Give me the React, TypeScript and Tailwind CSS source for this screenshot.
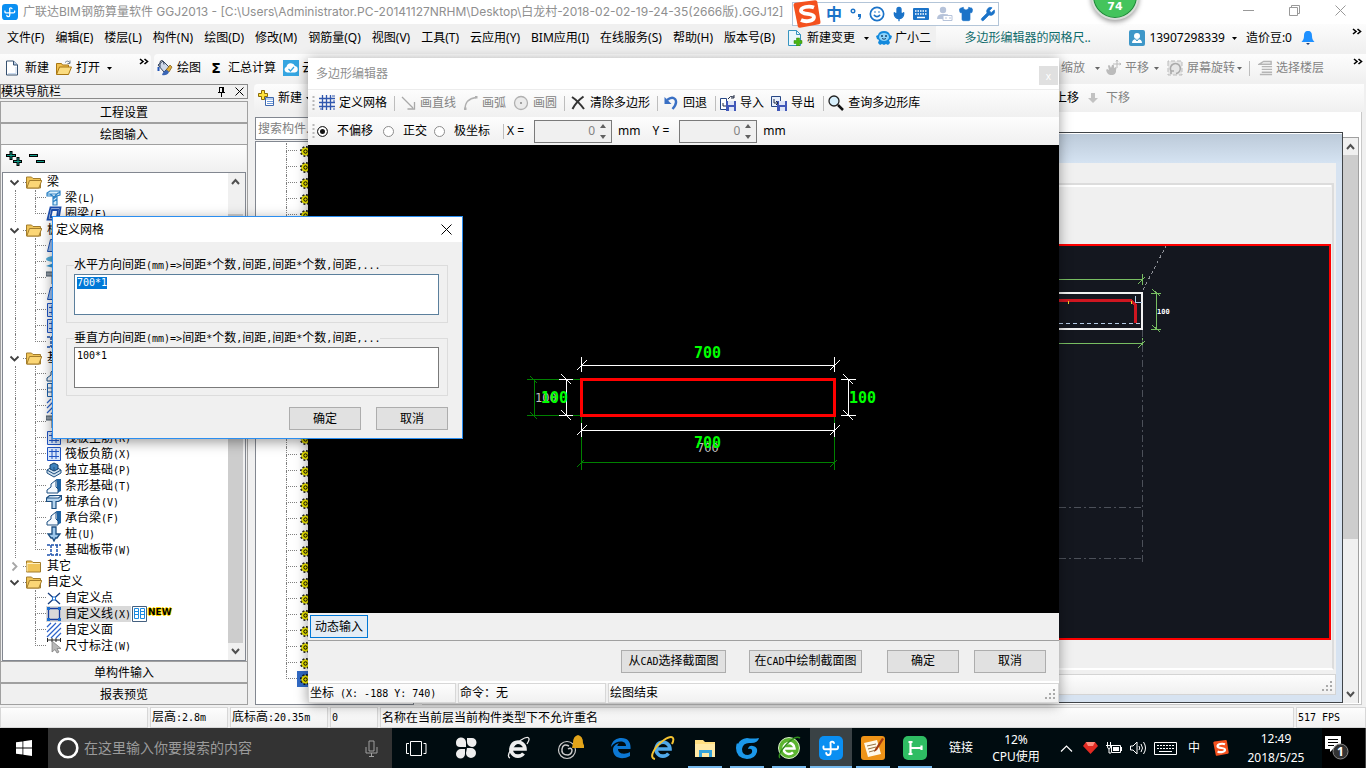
import { useEffect, useRef } from 'react';
import type { ReactNode } from 'react';
import { Mic, Shirt, Smile, Wrench } from 'lucide-react';

interface IconProps {
  children: ReactNode;
  className?: string;
  box?: string;
}
const Icon = ({ children, className = 'h-4 w-4', box = '0 0 16 16' }: IconProps) => (
  <svg className={`shrink-0 ${className}`} viewBox={box} fill="none" aria-hidden="true">
    {children}
  </svg>
);

// Half-width latin next to full-width han characters
const Song = ({ text }: { text: string }) => (
  <span className="whitespace-pre">
    {text.split(/([\x20-\x7e]+)/).map((part, i) =>
      i % 2 ? (
        <span key={i} className="font-['DejaVu_Sans_Mono',monospace] text-[10px]">
          {part}
        </span>
      ) : (
        part
      ),
    )}
  </span>
);

const Caret = ({ className = 'text-black' }: { className?: string }) => (
  <Icon className={`h-2 w-[7px] ${className}`} box="0 0 7 8">
    <path d="M1 3h5L3.500 6z" fill="currentColor" />
  </Icon>
);

const Separator = () => <span className="h-[15px] w-px shrink-0 bg-[#bdbdbd]" />;

const More = () => (
  <Icon className="h-2 w-[10px]" box="0 0 10 8">
    <path d="M1 1l3 2.500L1 6M5.500 1l3 2.500L5.500 6" stroke="#000" strokeWidth="1.600" />
  </Icon>
);

const Handle = () => (
  <Icon className="h-4 w-[3px]" box="0 0 3 16">
    <path d="M1.500 1v15" stroke="#b8b8b8" strokeWidth="2" strokeDasharray="2 2" />
  </Icon>
);

const AppLogo = ({ className }: { className: string }) => (
  <Icon className={className} box="0 0 24 24">
    <rect width="24" height="24" rx="5" fill="#0a8ff2" />
    <path
      d="M15 7a2 2 0 0 0-3.500-.5Q11.700 10 11.700 16q0 3-2.200 3-2 0-2.300-2M4.500 10.500q-.5 2.800 1.500 2.800h11q2.500 0 2-2.800"
      stroke="#fff"
      strokeWidth="1.900"
      strokeLinecap="round"
    />
  </Icon>
);

const SogouLogo = ({ className }: { className: string }) => (
  <Icon className={className} box="0 0 28 28">
    <path d="M.5 5Q.5 3 2.500 2.700L22 .2q2-.2 2.300 1.500L27.500 22q.2 1.800-1.500 2.200L7 27.700q-1.800.2-2.200-1.500z" fill="#f4511e" />
    <path d="M21 7.500C16 5.500 7.500 7 8 11s13 2 13 6-8 5.500-13 3" stroke="#fff" strokeWidth="3.800" />
  </Icon>
);

const TitleBar = () => (
  <header className="flex h-6 shrink-0 items-center bg-white pr-5 text-[#8f8f8f]">
    <AppLogo className="ml-0.5 h-4 w-4" />
    <h1 className="ml-[5px] font-['Inter','Noto_Sans_CJK_SC',sans-serif] whitespace-nowrap">
      广联达BIM钢筋算量软件 GGJ2013 - [C:\Users\Administrator.PC-20141127NRHM\Desktop\白龙村-2018-02-02-19-24-35(2666版).GGJ12]
    </h1>
    <div className="mb-1 ml-auto flex gap-[35px]">
      <button aria-label="最小化">
        <Icon className="h-[11px] w-[11px]" box="0 0 11 11">
          <path d="M0 5.500h11" stroke="#999" />
        </Icon>
      </button>
      <button aria-label="还原">
        <Icon className="h-[11px] w-[11px]" box="0 0 11 11">
          <path d="M.5 2.500h8v8h-8zM2.500 2.500v-2h8v8h-2" stroke="#999" />
        </Icon>
      </button>
      <button aria-label="关闭">
        <Icon className="h-[11px] w-[11px]" box="0 0 11 11">
          <path d="M.5.5l10 10m0-10l-10 10" stroke="#999" />
        </Icon>
      </button>
    </div>
  </header>
);

const menus = [
  '文件(F)',
  '编辑(E)',
  '楼层(L)',
  '构件(N)',
  '绘图(D)',
  '修改(M)',
  '钢筋量(Q)',
  '视图(V)',
  '工具(T)',
  '云应用(Y)',
  'BIM应用(I)',
  '在线服务(S)',
  '帮助(H)',
  '版本号(B)',
];

const MenuBar = () => (
  <nav className="flex h-[30px] shrink-0 items-center bg-[#f0f0f0] pb-[3px] pl-[7px] whitespace-nowrap">
    <div className="flex gap-[11px]">
      {menus.map((m) => (
        <button key={m}>{m}</button>
      ))}
    </div>
    <button className="ml-3 flex items-center gap-1">
      <Icon>
        <path d="M1.500.5h8l4 4v11h-12z" fill="#eaf7fd" stroke="#3795c0" />
        <path d="M9.500.5v4h4" stroke="#3795c0" />
        <path d="M9.500 8h3v2.500H15v3h-2.500V16h-3v-2.500H7v-3h2.500z" fill="#49b512" stroke="#2e8409" strokeWidth=".5" />
      </Icon>
      新建变更
      <Caret className="ml-1 text-black" />
    </button>
    <button className="ml-[6px] flex items-center gap-[3px]">
      <Icon>
        <path d="M0 6l2-1q1-4 6-4t6 4l2 1-1 3-2 1 1 3-2 2-2-1-2 1-2-1-2 1-2-2 1-3-2-1z" fill="#1389dc" />
        <ellipse cx="8" cy="7" rx="5" ry="4" fill="#8cd3fb" />
        <circle cx="6" cy="6" r="1" fill="#17466e" />
        <circle cx="10" cy="6" r="1" fill="#17466e" />
        <path d="M6 8.500q2 1.500 4 0" stroke="#17466e" />
      </Icon>
      广小二
    </button>
    <div className="ml-auto flex h-full items-center bg-linear-to-b from-[#fcfcfc] to-[#f0f0f0] pl-7 text-[#0f6b6b]">
      <a href="#tip" className="w-[160px]">
        多边形编辑器的网格尺..
      </a>
    </div>
    <div className="flex h-full items-center bg-linear-to-b from-[#fcfcfc] to-[#f0f0f0] pr-1 pl-[5px]">
      <button className="flex items-center gap-1">
        <Icon>
          <rect width="16" height="16" rx="2" fill="#3e97c8" />
          <circle cx="8" cy="6" r="3" fill="#fff" />
          <path d="M3 13q0-4 5-4t5 4z" fill="#fff" />
          <path d="M6.500 9L8 11l1.500-2" stroke="#3e97c8" />
        </Icon>
        13907298339
        <Caret className="ml-0.5 text-black" />
      </button>
      <span className="ml-2">造价豆:0</span>
      <Icon className="ml-2 h-4 w-4">
        <path d="M8 1c3 0 4 2 4 5 0 3 1 4 2.500 6h-13C3 10 4 9 4 6c0-3 1-5 4-5z" fill="#1e90ff" />
        <path d="M6 13h4l-2 2z" fill="#1d3d75" />
      </Icon>
      <span className="mb-3 ml-9">
        <More />
      </span>
    </div>
  </nav>
);

const NewPageIcon = () => (
  <Icon>
    <path d="M1.500 1h7l4 4v10h-11z" fill="#fff" stroke="#35506f" />
    <path d="M3 13.500h8V7" stroke="#c7d8ee" />
    <path d="M8.500 1v4h4" fill="#b9cce6" stroke="#35506f" />
  </Icon>
);

const OpenFolderIcon = () => (
  <Icon>
    <path d="M.5 3.500h5l1 1.500h6v9h-12z" fill="#f0c050" stroke="#a97611" />
    <path d="M3.500 7h12l-3 7.500H.5z" fill="#fbdc80" stroke="#a97611" />
    <path d="M9 2.500q3-3 5 .5m0-2.500v3h-2.500" stroke="#6e7f91" />
  </Icon>
);

const bar = 'bg-linear-to-b from-[#fdfdfd] to-[#f0f0f0]';

const MainToolbar = () => (
  <div className="flex h-[30px] shrink-0 items-center gap-[3px] pb-0.5 whitespace-nowrap">
    <div className={`flex h-7 w-[151px] shrink-0 items-center rounded-r pl-[5px] ${bar}`}>
      <button className="flex items-center gap-1">
        <NewPageIcon />
        新建
      </button>
      <button className="ml-[7px] flex items-center gap-1">
        <OpenFolderIcon />
        打开
        <Caret className="ml-0.5 text-black" />
      </button>
      <span className="mr-0.5 mb-3 ml-auto">
        <More />
      </span>
    </div>
    <div className={`flex h-7 flex-1 items-center rounded-l pl-[3px] ${bar}`}>
      <button className="flex items-center gap-1">
        <Icon>
          <path d="M1 5l5-4 6 6-5 5z" fill="#cfd9ea" stroke="#34435c" />
          <path d="M3 7V2.500q0-2 2-2t2 4" stroke="#34435c" />
          <path d="M1.500 7v4" stroke="#2356b8" strokeWidth="2" />
          <path d="M9 10l4-5 2 2-3 5z" fill="#e0ac39" stroke="#7d5810" strokeWidth=".7" />
          <path d="M5 15q1-4 5-5l2 2q-2 4-7 3z" fill="#3b66b5" />
        </Icon>
        绘图
      </button>
      <button className="ml-[10px] flex items-center gap-[7px]">
        <span className="w-[10px] font-['DejaVu_Sans'] text-sm leading-4 font-bold">Σ</span>
        汇总计算
      </button>
      <button className="ml-[7px] flex items-center gap-[3px]">
        <Icon>
          <rect width="16" height="16" fill="#35a5e1" />
          <path d="M4 12.500a3 3 0 0 1-.5-5.800A4.500 4.500 0 0 1 12 6a3.300 3.300 0 0 1 0 6.500z" fill="#fff" />
          <path d="M5.500 9l2 2 3.500-4" stroke="#35a5e1" strokeWidth="1.200" />
        </Icon>
        云
      </button>
      <div className="ml-auto flex items-center text-[#838383]">
        <button className="flex items-center gap-[9px]">
          缩放
          <Caret className="text-[#666]" />
        </button>
        <button className="ml-1 flex items-center gap-1">
          <Icon>
            <path d="M3 14q-3-4-1-5l2 1-1-4q1-2 2 0l1 2 1-3q2-1 2 1v2l2-1q1 1 0 3v2q-1 3-3 3H5z" fill="#bbb" />
            <path d="M12 0v8M8 4h8M11 1.500L12 0l1 1.500M14.500 3L16 4l-1.500 1" stroke="#bbb" />
          </Icon>
          平移
          <Caret className="text-[#666]" />
        </button>
        <button className="ml-[7px] flex items-center gap-1">
          <Icon>
            <path d="M1 4V1h14v14H1z" fill="#e6e6e6" stroke="#bbb" strokeDasharray="4 2" />
            <path d="M4 11a5 5 0 1 1 5 2.500M4 14v-3h3" stroke="#aaa" strokeWidth="1.600" />
          </Icon>
          屏幕旋转
        </button>
        <span className="mr-2 ml-px flex items-center gap-[6px]">
          <Caret className="text-[#666]" />
          <Separator />
        </span>
        <button className="flex items-center gap-[3px]">
          <Icon className="h-4 w-[15px]">
            <path d="M1 4l5-3h8v3zM4 6.500h11M4 9.500h11M4 12.500h11M2 15h13" stroke="#b5b5b5" strokeWidth="1.500" />
          </Icon>
          选择楼层
        </button>
        <span className="mr-[3px] mb-3 ml-[29px]">
          <More />
        </span>
      </div>
    </div>
  </div>
);

const shapes: Record<string, ReactNode> = {
  beam: <path d="M1 3l3-2h10v4l-3 1v9H7V6H1zM1 4h10l3-2M4 4l4 3 4-4M7 9l4-3M7 12l4-3" stroke="#2f83c5" strokeWidth="1.200" fill="#d5edfb" />,
  ring: <path d="M4.500 1.500h10l-2 12h-11zM6 4h6l-1 7H4.500z" stroke="#1d4fae" strokeWidth="1.800" />,
  slab: <path d="M4.500 1.500h10l-2 12h-11z" stroke="#1d4fae" fill="#9fc2f1" />,
  hole: (
    <>
      <ellipse cx="8" cy="5" rx="8" ry="3" fill="#51acd8" />
      <path d="M0 12l8-3 7 3-7 2z" fill="#3797cf" />
    </>
  ),
  cap: <path d="M0 2h15v3h-5v9H6V6H0z" fill="#8d98a3" stroke="#4b5a68" />,
  grid: <path d="M1.500 1.500h13v13h-13zM1.500 6h13M1.500 10h13M6 1.500v13M10 1.500v13" stroke="#1d5fa8" />,
  bars: <path d="M1.500 1.500h13v13h-13zM3 5.500h10M3 10.500h10M6 3v10M10 3v10" stroke="#2154c2" fill="#d9e7fb" />,
  footing: (
    <>
      <path d="M1 8l7-4 7 4v3l-7 4-7-4z" fill="#cfe0ee" stroke="#1c4e80" />
      <path d="M4 3l4-2 4 2v4l-4 2-4-2z" fill="#3f83bd" stroke="#123f6d" />
      <path d="M1 8l7 4 7-4M8 5v4" stroke="#1c4e80" />
    </>
  ),
  strip: (
    <>
      <path d="M10 1h5v12l-4 2V5z" fill="#1d62a2" />
      <path d="M1 15v-3l4-3V6l5-4v7l2 2v4z" fill="#f4f9fd" stroke="#1c4e80" />
    </>
  ),
  pileCap: <path d="M.5 4l3-2.500h12v4l-3 2H10v7H6v-7H.5zM.5 4h12l3-2.500" fill="#b5d4ee" stroke="#1c4e80" strokeWidth="1.200" />,
  pile: <path d="M6 1h4v7h4l-3 4H9.500L8 15l-1.500-3H5L2 8h4z" fill="#9ec8eb" stroke="#1c4e80" strokeWidth="1.300" />,
  band: <path d="M1 3h14M1 13h14M5 3v10M11 3v10" stroke="#1d52ad" strokeWidth="1.500" strokeDasharray="3 1" />,
  point: (
    <>
      <path d="M2 3l12 11M14 3L2 14" stroke="#173b7a" strokeWidth="1.300" />
      <rect x="6.500" y="7" width="3" height="3" fill="#fff" stroke="#1c6fd0" />
    </>
  ),
  line: (
    <>
      <path d="M2.500 2.500h11v11h-11z" stroke="#173b9a" strokeWidth="1.300" />
      <path d="M1 1h3v3H1zM12 1h3v3h-3zM1 12h3v3H1zM12 12h3v3h-3z" fill="#1c6fd0" />
    </>
  ),
  face: <path d="M1 5l4-4M1 10l9-9M1 15L15 1M5 16L15 6M10 16l5-5" stroke="#2c62c9" strokeWidth="1.200" />,
  dim: (
    <>
      <path d="M1.500 0v4M14.500 0v4M1.500 2h13M6 0v4M10 0v4" stroke="#222" />
      <path d="M6 3v11l3-2.500 2 3.500 2-1-2-3.500h4z" fill="#b8b8b8" stroke="#777" strokeWidth=".7" />
    </>
  ),
};

interface Group {
  name: string;
  open: boolean;
  items: { icon: string; label: string; selected?: boolean }[];
}

const groups: Group[] = [
  {
    name: '梁',
    open: true,
    items: [
      { icon: 'beam', label: '梁(L)' },
      { icon: 'ring', label: '圈梁(E)' },
    ],
  },
  {
    name: '板',
    open: true,
    items: [
      { icon: 'slab', label: '' },
      { icon: 'hole', label: '' },
      { icon: 'cap', label: '' },
      { icon: 'slab', label: '' },
      { icon: 'bars', label: '' },
      { icon: 'bars', label: '' },
      { icon: 'band', label: '' },
    ],
  },
  {
    name: '基础',
    open: true,
    items: [
      { icon: 'strip', label: '' },
      { icon: 'grid', label: '' },
      { icon: 'face', label: '' },
      { icon: 'cap', label: '' },
      { icon: 'bars', label: '筏板主筋(R)' },
      { icon: 'bars', label: '筏板负筋(X)' },
      { icon: 'footing', label: '独立基础(P)' },
      { icon: 'strip', label: '条形基础(T)' },
      { icon: 'pileCap', label: '桩承台(V)' },
      { icon: 'strip', label: '承台梁(F)' },
      { icon: 'pile', label: '桩(U)' },
      { icon: 'band', label: '基础板带(W)' },
    ],
  },
  { name: '其它', open: false, items: [] },
  {
    name: '自定义',
    open: true,
    items: [
      { icon: 'point', label: '自定义点' },
      { icon: 'line', label: '自定义线(X)', selected: true },
      { icon: 'face', label: '自定义面' },
      { icon: 'dim', label: '尺寸标注(W)' },
    ],
  },
];

const FolderIcon = ({ open }: { open: boolean }) => (
  <Icon>
    <path d="M.5 3h5l1.500 1.500h7.500V14H.5z" fill="#f0c458" stroke="#a37d2c" />
    {open ? (
      <path d="M3.500 6.500h12.300l-3 7.500H.8z" fill="#fbd676" stroke="#a37d2c" />
    ) : (
      <path d="M1 13.500V5.500h13" stroke="#fff0c0" />
    )}
  </Icon>
);

const ScrollArrow = ({ down = false }: { down?: boolean }) => (
  <Icon className={`h-[17px] w-[15px] ${down ? 'rotate-180' : ''}`} box="0 0 15 17">
    <path d="M4 11l3.500-4 3.500 4" stroke="#505050" strokeWidth="2" />
  </Icon>
);

const Branch = ({ last }: { last: boolean }) => (
  <span className="flex w-[11px] shrink-0 flex-col">
    <span className="h-2 border-b border-l border-dotted border-[#808080]" />
    <span className={last ? 'h-2' : 'h-2 border-l border-dotted border-[#808080]'} />
  </span>
);

const ModuleTree = () => (
  <div className="flex min-h-0 flex-1 border border-[#828790] bg-white">
    <ul className="min-w-0 flex-1 overflow-hidden pt-px">
      {groups.map((g, gi) => (
        <li key={g.name}>
          <div className="flex h-4 items-center pl-[6px]">
            <Icon className="h-[11px] w-[11px]" box="0 0 11 11">
              {g.open ? (
                <path d="M1.500 3.500l4 4 4-4" stroke="#404040" strokeWidth="1.800" />
              ) : (
                <path d="M3.500 1.500l4 4-4 4" stroke="#a6a6a6" strokeWidth="1.800" />
              )}
            </Icon>
            <span className="ml-[3px] w-[3px] border-b border-dotted border-[#808080]" />
            <FolderIcon open={g.open} />
            <span className="ml-[5px]">{g.name}</span>
          </div>
          <ul>
            {g.items.map((item, i) => (
              <li key={i} className="flex h-4 items-center">
                <span
                  className={
                    gi < 3
                      ? 'ml-3 h-4 w-5 shrink-0 border-l border-dotted border-[#808080]'
                      : 'ml-3 h-4 w-5 shrink-0'
                  }
                />
                <Branch last={i === g.items.length - 1} />
                <span className={item.selected ? 'flex h-4 items-center bg-[#d9d9d9]' : 'flex h-4 items-center'}>
                  <Icon className="h-4 w-4">{shapes[item.icon]}</Icon>
                  <span className="ml-[3px]">
                    <Song text={item.label} />
                  </span>
                </span>
                {item.selected && (
                  <>
                    <Icon className="ml-px h-4 w-4">
                      <path d="M.5.5h14v15H.5z" fill="#fff" stroke="#44607f" />
                      <path d="M2.500 2.500h4v10h-4zM8.500 2.500h4v10h-4zM3 5.500h3M3 8.500h3M9 5.500h3M9 8.500h3" stroke="#1c8ae0" />
                    </Icon>
                    <b className="mb-1 font-['DejaVu_Sans'] text-[9px] leading-[9px] [text-shadow:1px_0_0_#ffd800,-1px_0_0_#ffd800,0_1px_0_#ffd800,0_-1px_0_#ffd800]">
                      NEW
                    </b>
                  </>
                )}
              </li>
            ))}
          </ul>
        </li>
      ))}
    </ul>
    <div className="flex w-[17px] shrink-0 flex-col bg-[#f0f0f0]">
      <ScrollArrow />
      <div className="mt-6 w-[15px] flex-1 bg-[#cdcdcd]" />
      <ScrollArrow down />
    </div>
  </div>
);

const navButton = 'h-[22px] shrink-0 border border-[#a0a0a0] bg-[#f0f0f0] text-center leading-[21px]';

const ModulePanel = () => (
  <aside className="flex w-[248px] shrink-0 flex-col bg-[#f0f0f0]">
    <div className="mb-[2px] flex h-[15px] shrink-0 items-center border border-[#8a8a8a] bg-[#f0f0f0] pr-[3px]">
      模块导航栏
      <Icon className="ml-auto h-[11px] w-[11px]" box="0 0 11 11">
        <path d="M3.500 1v5M7.500 1v5M3.500 1.500h4M2 6.500h7M5.500 7v4" stroke="#000" />
        <path d="M7 1v5" stroke="#000" strokeWidth="2" />
      </Icon>
      <Icon className="ml-2 h-[9px] w-[9px]" box="0 0 9 9">
        <path d="M.5.5l8 8m0-8l-8 8" stroke="#000" />
      </Icon>
    </div>
    <button className={navButton}>工程设置</button>
    <button className={navButton}>绘图输入</button>
    <div className="flex min-h-0 flex-1 flex-col border-x border-[#a0a0a0] px-px">
      <div className={`flex h-[27px] shrink-0 items-center gap-[7px] pl-1 ${bar}`}>
        <Icon>
          <path d="M5 0v9M0 4.500h10M12 6v9M7 10.500h9" stroke="#000" strokeWidth="3" />
          <path d="M5 1v7M1 4.500h8M12 7v7M8 10.500h7" stroke="#12a08c" />
        </Icon>
        <Icon>
          <path d="M0 4.500h9M7 10.500h9" stroke="#000" strokeWidth="3" />
          <path d="M1 4.500h7M8 10.500h7" stroke="#12a08c" />
        </Icon>
      </div>
      <ModuleTree />
    </div>
    <button className={navButton}>单构件输入</button>
    <button className={navButton}>报表预览</button>
  </aside>
);

const Gear = () => (
  <Icon className="h-[11px] w-[11px]" box="0 0 11 11">
    <circle cx="5.500" cy="5.500" r="4.700" stroke="#000" strokeWidth="1.600" strokeDasharray="1.800 1.900" />
    <circle cx="5.500" cy="5.500" r="4.300" fill="#f5ee00" />
    <circle cx="5.500" cy="5.500" r="4.200" stroke="#222" strokeWidth=".8" strokeDasharray="1.800 1.500" />
    <circle cx="5.500" cy="5.500" r="1.700" fill="#f5ee00" stroke="#000" />
  </Icon>
);

const ComponentList = () => (
  <ul className="min-h-0 flex-1 overflow-hidden border border-[#828790] bg-white pt-px">
    {Array.from({ length: 34 }, (_, i) => (
      <li key={i} className="flex h-4 items-center pl-[30px]">
        <Branch last={i === 33} />
        <span className={i === 33 ? 'flex h-4 w-[120px] items-center bg-[#316ac5] pl-[3px]' : 'pl-[3px]'}>
          <Gear />
        </span>
      </li>
    ))}
  </ul>
);

const Grip = () => (
  <Icon className="mr-0.5 mb-px ml-auto h-3 w-3 self-end" box="0 0 12 12">
    <path d="M9 1h2M5 5h2m2 0h2M1 9h2m2 0h2m2 0h2" stroke="#aaa" strokeWidth="2" />
  </Icon>
);

const SectionView = () => (
  <svg className="h-full w-[270px] shrink-0" fill="none" shapeRendering="crispEdges" aria-label="截面">
    <path d="M84 44l23-44" stroke="#8f9299" strokeDasharray="3 3" />
    <path d="M0 33.500h83M83.500 28v11M79 38l7-7M0 97.500h83M83.500 92v11M79 102l7-7M97.500 47v36M92 47.500h10M92 83.500h10M93 43l8 7M93 79l8 7" stroke="#78be62" />
    <path d="M0 47h83v36H0" stroke="#f2f2f2" strokeWidth="2" />
    <path d="M0 54.500h72l4 4V77" stroke="#cf1620" strokeWidth="3" />
    <path d="M9.500 55v3M72.500 55v3" stroke="#e6d52b" />
    <path d="M0 77.500h82" stroke="#b4cbe6" strokeDasharray="4 3" />
    <path d="M76.500 50v6h6" stroke="#b4cbe6" />
    <path d="M83.500 84v233M0 261.500h84M0 312.500h84" stroke="#4c5059" strokeDasharray="7 3 2 3" />
    <text x="98" y="68" fill="#fff" className="font-['DejaVu_Sans_Mono'] text-[7px] font-bold">
      100
    </text>
  </svg>
);

const SectionWindow = () => (
  <section className="flex min-w-0 flex-1 flex-col border border-[#404448] bg-[#d7e3f1]">
    <div className="h-[30px] shrink-0 border-t border-white bg-linear-to-b from-[#bccad9] to-[#d5e3f2]" />
    <div className="mr-[6px] flex min-h-0 flex-1 flex-col bg-[#f0f0f0]">
      <div className="mt-5 mr-0.5 flex min-h-0 flex-1 flex-col border-2 border-[#dcdcdc] border-b-white bg-[#f0f0f0] pr-px pb-7">
        <div className="h-[59px] shrink-0 border-t-2 border-white" />
        <div className="flex min-h-0 flex-1 justify-end border-2 border-[#f00] bg-[#14171f]">
          <SectionView />
        </div>
      </div>
      <div className={`mt-1 flex h-[21px] shrink-0 border border-[#d4d4d4] ${bar}`}>
        <Grip />
      </div>
    </div>
    <div className="h-[7px] shrink-0" />
  </section>
);

const Workspace = () => (
  <main className="flex min-w-0 flex-1 flex-col">
    <div className={`mr-0.5 flex h-7 shrink-0 items-center rounded-l pr-[234px] pl-1 ${bar}`}>
      <button className="flex items-center gap-1">
        <Icon>
          <path d="M3.500.5h3v3h3v3h-3v3h-3v-3h-3v-3h3z" fill="#ffe23c" stroke="#8b6b08" />
          <path d="M7.500 7.500h8v8h-8z" fill="#fff" stroke="#3f68ae" />
          <path d="M8 9h7M9 11.500h6M9 13.500h6" stroke="#6c98d8" />
        </Icon>
        新建
        <Caret className="-ml-px text-black" />
      </button>
      <button className="ml-auto">上移</button>
      <button className="ml-[9px] flex items-center gap-2 text-[#838383]">
        <Icon className="h-[10px] w-[10px]" box="0 0 10 10">
          <path d="M3 0h4v5h3L5 10 0 5h3z" fill="#c2c2c2" />
        </Icon>
        下移
      </button>
    </div>
    <div className="flex min-h-0 flex-1 gap-2">
      <div className="flex w-[160px] shrink-0 flex-col pt-[5px] pl-px">
        <input
          aria-label="搜索构件"
          placeholder="搜索构件..."
          className="mb-px h-[23px] shrink-0 border border-[#828790] bg-white px-[2px] placeholder:text-[#808080]"
        />
        <ComponentList />
      </div>
      <div className="mr-1 flex min-w-0 flex-1 flex-col border-r border-b border-[#c8c8c8] bg-white">
        <div className="h-5 shrink-0" />
        <div className="mb-px flex min-h-0 flex-1">
          <SectionWindow />
          <div className="mt-[5px] mr-[2px] flex w-[16px] shrink-0 flex-col border-t border-r border-[#a0a0a0] bg-[#f0f0f0]">
            <ScrollArrow />
            <div className="h-[384px] bg-[#cdcdcd]" />
            <span className="mt-auto flex">
              <ScrollArrow down />
            </span>
          </div>
        </div>
      </div>
    </div>
  </main>
);

const cell = 'flex items-center border border-[#d7d7d7] bg-linear-to-b from-[#fdfdfd] to-[#f1f1f1] pl-px whitespace-nowrap';

const StatusBar = () => (
  <footer className="flex h-[21px] shrink-0 gap-0.5 bg-[#f0f0f0]">
    <div className={`w-[148px] shrink-0 ${cell}`} />
    <div className={`w-[78px] shrink-0 ${cell}`}>
      <Song text="层高:2.8m" />
    </div>
    <div className={`w-[98px] shrink-0 ${cell}`}>
      <Song text="底标高:20.35m" />
    </div>
    <div className={`w-[48px] shrink-0 ${cell}`}>
      <Song text="0" />
    </div>
    <div className={`flex-1 ${cell}`}>名称在当前层当前构件类型下不允许重名</div>
    <div className={`w-[70px] shrink-0 ${cell}`}>
      <Song text="517 FPS" />
    </div>
  </footer>
);

const PolygonToolbar = () => (
  <div className={`flex h-7 shrink-0 items-center border-t border-[#ececec] pb-px pl-1 whitespace-nowrap ${bar}`}>
    <Handle />
    <button className="ml-1 flex items-center gap-1">
      <Icon>
        <path d="M3.500 0v15M7.500 0v15M11.500 0v15M0 3.500h16M0 7.500h16M0 11.500h16" stroke="#3057ae" strokeWidth="1.300" />
        <path d="M13 1h3M14 6h2M14 14h2M1 14h2" stroke="#3057ae" />
      </Icon>
      定义网格
    </button>
    <span className="mr-[6px] ml-[7px] flex">
      <Separator />
    </span>
    <button className="flex items-center gap-[3px] text-[#838383]">
      <Icon>
        <path d="M1 2l11 11M13.500 7v7h-7" stroke="#a8a8a8" strokeWidth="1.300" />
      </Icon>
      画直线
    </button>
    <button className="ml-[7px] flex items-center gap-[3px] text-[#838383]">
      <Icon>
        <path d="M2 14Q2 4 13 2.500" stroke="#b0b0b0" strokeWidth="1.300" />
        <path d="M1 12.500h2.500V15H1zM12 1h2.500v2.500H12z" fill="#b0b0b0" />
      </Icon>
      画弧
    </button>
    <button className="ml-[7px] flex items-center gap-1 text-[#838383]">
      <Icon>
        <circle cx="8" cy="8" r="6.500" fill="#ebebeb" stroke="#b0b0b0" strokeWidth="1.300" />
        <path d="M7 7h2v2H7z" fill="#a0a0a0" />
      </Icon>
      画圆
    </button>
    <span className="mr-[5px] ml-[7px] flex">
      <Separator />
    </span>
    <button className="flex items-center gap-1">
      <Icon>
        <path d="M2 2q6 4 12 12M13.500 1.500Q6 7 2.500 14" stroke="#333" strokeWidth="2" />
      </Icon>
      清除多边形
    </button>
    <span className="mr-[5px] ml-[7px] flex">
      <Separator />
    </span>
    <button className="flex items-center gap-1">
      <Icon>
        <path d="M4 5q5-4 8-1 3 4-2.500 10" stroke="#3a70c4" strokeWidth="2.400" />
        <path d="M1.500 2v7h7z" fill="#3a70c4" />
      </Icon>
      回退
    </button>
    <span className="mr-1 ml-2 flex">
      <Separator />
    </span>
    <button className="flex items-center gap-1">
      <Icon>
        <path d="M.5 3.500h6v11h-6z" fill="#fff" stroke="#274785" />
        <path d="M6 6h10v10H6z" fill="#4057b8" />
        <path d="M8 6h6v4H8zM9 12h5v4H9z" fill="#dfe5f6" />
        <path d="M8 4q2-4 6-2M14 0v3h-3M3 8v3h3" stroke="#222c44" />
      </Icon>
      导入
    </button>
    <button className="ml-[7px] flex items-center gap-1">
      <Icon>
        <path d="M.5 1.500h9v10h-9z" fill="#e8effb" stroke="#274785" />
        <path d="M6 6h10v10H6z" fill="#4057b8" />
        <path d="M8 6h6v4H8zM9 12h5v4H9z" fill="#dfe5f6" />
        <path d="M3 4v4h4M5 6l2 2-2 2" stroke="#222c44" />
      </Icon>
      导出
    </button>
    <span className="mr-1 ml-2 flex">
      <Separator />
    </span>
    <button className="flex items-center gap-1">
      <Icon>
        <circle cx="6" cy="6" r="5" fill="#d7effc" stroke="#222" strokeWidth="1.300" />
        <path d="M10 10l5 5" stroke="#111" strokeWidth="2.500" />
      </Icon>
      查询多边形库
    </button>
  </div>
);

const radio =
  'm-0 h-[11px] w-[11px] shrink-0 appearance-none rounded-full border border-[#8c8c8c] bg-white checked:border-[#333] checked:bg-[#111] checked:shadow-[inset_0_0_0_2px_#fff]';

const Coordinate = ({ axis }: { axis: string }) => (
  <label className="flex items-center gap-[6px]">
    {axis} =
    <span className="ml-1 flex h-[23px] w-[78px] border border-[#7a7a7a] bg-[#f0f0f0]">
      <input className="w-[60px] bg-transparent text-right text-[#838383]" defaultValue="0" />
      <Icon className="ml-1 h-[21px] w-2" box="0 0 8 21">
        <path d="M1 7h6L4 3zM1 14h6l-3 4z" fill="#606060" />
      </Icon>
    </span>
    mm
  </label>
);

const OffsetBar = () => (
  <div className={`flex h-7 shrink-0 items-center pl-1 whitespace-nowrap ${bar}`}>
    <Handle />
    <label className="ml-[2px] flex items-center gap-[9px]">
      <input type="radio" name="offset" className={radio} defaultChecked />
      不偏移
    </label>
    <label className="ml-[10px] flex items-center gap-[9px]">
      <input type="radio" name="offset" className={radio} />
      正交
    </label>
    <label className="ml-[7px] flex items-center gap-[9px]">
      <input type="radio" name="offset" className={radio} />
      极坐标
    </label>
    <span className="mr-[3px] ml-[13px] flex">
      <Separator />
    </span>
    <Coordinate axis="X" />
    <span className="ml-3">
      <Coordinate axis="Y" />
    </span>
  </div>
);

const PolygonCanvas = () => (
  <svg className="h-full w-full" fill="none" aria-label="多边形">
    <g shapeRendering="crispEdges">
      <path
        d="M273.500 272v53M526.500 272v53M273 317.500h254M269 322l7-7M522 322l7-7M226.500 234v37M219 234.500h54M219 270.500h54M222 231l7 7M222 267l7 7"
        stroke="#008000"
      />
      <path
        d="M273.500 212v15M526.500 212v15M273 220.500h254M269 225l10-10M522 225l10-10M273.500 278v14M526.500 278v14M273 285.500h254M269 290l10-10M522 290l10-10"
        stroke="#fff"
      />
      <path
        d="M258.500 234v37M251 234.500h14M251 270.500h14M253 229l10 10M253 265l10 10M540.500 234v37M533 234.500h15M533 270.500h15M535 229l10 10M535 265l10 10"
        stroke="#fff"
      />
      <rect x="273.500" y="234.500" width="253" height="36" stroke="#f00" strokeWidth="3" />
    </g>
    <g className="font-['DejaVu_Sans_Mono'] text-xs" fill="#c0c0c0">
      <text x="389" y="307">700</text>
      <text x="227" y="257">100</text>
    </g>
    <g className="font-['DejaVu_Sans_Mono'] text-[15px] font-bold" fill="#0f0">
      <text x="386" y="213">700</text>
      <text x="386" y="303">700</text>
      <text x="233" y="258">100</text>
      <text x="541" y="258">100</text>
    </g>
  </svg>
);

const dialogButton = 'h-[23px] shrink-0 border border-[#adadad] bg-[#e1e1e1] text-center leading-5 whitespace-nowrap';

const PolygonEditor = () => (
  <section className="absolute top-[58px] left-[308px] flex h-[645px] w-[751px] flex-col bg-[#f0f0f0] shadow-[0_2px_12px_rgba(0,0,0,0.4)]">
    <div className="flex h-[31px] shrink-0 items-center bg-white pl-2 text-[#8f8f8f]">
      <h2>多边形编辑器</h2>
      <button aria-label="关闭" className="mt-1 mr-px ml-auto h-[19px] w-[19px] bg-[#e0e0e0] text-[10px] leading-4 text-white">
        x
      </button>
    </div>
    <PolygonToolbar />
    <OffsetBar />
    <div className="min-h-0 flex-1 bg-black">
      <PolygonCanvas />
    </div>
    <div className="flex h-7 shrink-0 items-center border-b border-[#a0a0a0] pl-0.5">
      <button className="h-[23px] w-[58px] border border-[#0078d7] bg-[#e3edf6] leading-5">动态输入</button>
    </div>
    <div className="flex h-10 shrink-0 items-center justify-end pr-[13px]">
      <button className={`w-[105px] ${dialogButton}`}>
        <Song text="从CAD选择截面图" />
      </button>
      <button className={`ml-[23px] w-[113px] ${dialogButton}`}>
        <Song text="在CAD中绘制截面图" />
      </button>
      <button className={`ml-[25px] w-[72px] ${dialogButton}`}>确定</button>
      <button className={`ml-[15px] w-[72px] ${dialogButton}`}>取消</button>
    </div>
    <div className="flex h-[22px] shrink-0 gap-0.5 border-t-2 border-white">
      <div className={`w-[148px] ${cell}`}>
        <Song text="坐标 (X: -188 Y: 740)" />
      </div>
      <div className={`w-[148px] ${cell}`}>命令：无</div>
      <div className={`flex-1 ${cell}`}>
        绘图结束
        <Grip />
      </div>
    </div>
  </section>
);

const GridDialog = () => {
  const horizontal = useRef<HTMLTextAreaElement>(null);

  useEffect(() => {
    horizontal.current?.focus();
    horizontal.current?.select();
  }, []);

  const area =
    "block h-[41px] w-full resize-none border border-[#7a7a7a] bg-white px-0.5 py-[2px] font-['DejaVu_Sans_Mono',monospace] text-[10px] leading-3 outline-none selection:bg-[#0078d7] selection:text-white focus:border-[#5b7f9c]";

  return (
    <div
      role="dialog"
      aria-label="定义网格"
      className="absolute top-[216px] left-[52px] flex h-[223px] w-[411px] flex-col border border-[#2b8ef0] bg-[#f0f0f0] shadow-[0_3px_12px_rgba(0,0,0,0.4)]"
    >
      <div className="flex h-[25px] shrink-0 items-center bg-white pr-[10px] pl-[3px]">
        <h2>定义网格</h2>
        <button aria-label="关闭" className="ml-auto">
          <Icon className="h-[11px] w-[11px]" box="0 0 11 11">
            <path d="M.5.5l10 10m0-10l-10 10" stroke="#000" />
          </Icon>
        </button>
      </div>
      <form className="flex flex-1 flex-col pt-[15px] pr-[14px] pl-[13px]">
        <fieldset className="h-[66px] border border-[#dcdcdc] pr-2 pb-[6px] pl-[7px]">
          <legend className="leading-4">
            <label htmlFor="horizontal">
              <Song text="水平方向间距(mm)=>间距*个数,间距,间距*个数,间距,..." />
            </label>
          </legend>
          <textarea id="horizontal" ref={horizontal} className={area} defaultValue="700*1" />
        </fieldset>
        <fieldset className="mt-[7px] h-[66px] border border-[#dcdcdc] pr-2 pb-[6px] pl-[7px]">
          <legend className="leading-4">
            <label htmlFor="vertical">
              <Song text="垂直方向间距(mm)=>间距*个数,间距,间距*个数,间距,..." />
            </label>
          </legend>
          <textarea id="vertical" className={area} defaultValue="100*1" />
        </fieldset>
        <div className="mt-[11px] flex justify-end gap-[15px]">
          <button type="button" className={`w-[72px] ${dialogButton}`}>
            确定
          </button>
          <button type="button" className={`w-[72px] ${dialogButton}`}>
            取消
          </button>
        </div>
      </form>
    </div>
  );
};

const InputMethodBar = () => (
  <div className="absolute top-0.5 left-[792px] flex h-6 w-[207px] items-center border border-[#b3c5d8] bg-white pl-[33px] text-[#1b73c8]">
    <SogouLogo className="absolute -top-[3px] left-0 h-7 w-7" />
    <b className="w-[16px] text-base leading-5">中</b>
    <Icon className="ml-2 h-4 w-3" box="0 0 12 16">
      <circle cx="3" cy="5" r="1.800" stroke="#1b73c8" strokeWidth="1.400" />
      <path d="M8 8h3v3q0 2-2.500 3v-1q1-1 1-2H8z" fill="#1b73c8" />
    </Icon>
    <Smile className="ml-[7px] h-4 w-4" strokeWidth={2.5} />
    <Mic className="ml-[6px] h-4 w-4" fill="currentColor" />
    <Icon className="ml-[6px] h-4 w-4">
      <rect y="2" width="16" height="12" rx="1" fill="#1b73c8" />
      <path d="M2 5h12M2 8h12" stroke="#fff" strokeWidth="1.500" strokeDasharray="1.500 1" />
      <path d="M4 11.500h8" stroke="#fff" strokeWidth="1.500" />
    </Icon>
    <Icon className="ml-2 h-4 w-4">
      <circle cx="6" cy="4" r="3.200" fill="#b6c3da" />
      <path d="M0 13q0-5 6-5t5 1v4z" fill="#b6c3da" />
      <path d="M6 9.500h9v5H6z" fill="#fff" stroke="#b6c3da" />
      <path d="M8 12h2m2 0h2" stroke="#b6c3da" />
    </Icon>
    <Shirt className="ml-[5px] h-4 w-4" fill="currentColor" strokeWidth={1} />
    <Wrench className="ml-[6px] h-4 w-4" fill="currentColor" strokeWidth={1} />
  </div>
);

const SpeedBall = () => (
  <div className="absolute -top-[28px] left-[1091px] flex h-[48px] w-[48px] items-end justify-center rounded-full border-2 border-[#d8dcd8] bg-[#44c45c] pb-[3px] font-['DejaVu_Sans'] text-[11px] leading-4 font-bold text-white shadow-[0_2px_5px_rgba(0,0,0,0.4),inset_0_0_0_1px_#21843a]">
    74
  </div>
);

const ieShape = (color: string) => (
  <path d="M6 13h13a7 7 0 1 0-1.500 4.500" stroke={color} strokeWidth="3.600" />
);

const taskIcons: { name: string; active?: boolean; running?: boolean; art: ReactNode }[] = [
  {
    name: 'Edge',
    art: <path d="M2 11C3 4 8 2 12.500 2c7 0 9.500 5 9 11H9c0 5 7 6 12 3v4C12 25 4 21 4 14c0-4 3-6 6-7-2 2-1.500 3-1.500 3H17c0-6-10-6-15 1z" fill="#0c78d4" />,
  },
  {
    name: 'Internet Explorer',
    art: (
      <>
        {ieShape('#4fa9ea')}
        <path d="M4 23C-3 22 4 10 13 4s11-2 8 4" stroke="#f5c432" strokeWidth="2" />
      </>
    ),
  },
  {
    name: '文件资源管理器',
    running: true,
    art: (
      <>
        <path d="M2 4h8l2 2h10v15H2z" fill="#ffdf82" />
        <path d="M2 8h20v13H2z" fill="#ffe9a6" />
        <path d="M6 21v-7h13v7h-3v-4H9v4z" fill="#35a4db" />
      </>
    ),
  },
  {
    name: '浏览器',
    running: true,
    art: <path d="M24 2q-1 5-8 5-8-1-9 6 0 6 6 6 5-1 4-5-1-2-4-1 1-4 5-3 5 1 4 6-2 7-10 7-11-1-11-11 0-3 1-5l1 1q2-5 9-6 6 1 12 0z" fill="#1b98ea" />,
  },
  {
    name: '360浏览器',
    running: true,
    art: (
      <>
        <circle cx="12" cy="12" r="10.500" fill="#5cb531" stroke="#d8f0c8" />
        <path d="M7 12.500h10.500a5.500 5.500 0 1 0-1.500 3.800" stroke="#fff" strokeWidth="2.600" />
        <path d="M3 22Q0 19 9 9T23 2" stroke="#2c8a1b" strokeWidth="1.500" />
      </>
    ),
  },
  { name: '广联达钢筋', active: true, running: true, art: <AppLogo className="h-6 w-6" /> },
  {
    name: '记事本',
    running: true,
    art: (
      <>
        <rect width="24" height="24" rx="3" fill="#ee9317" />
        <path d="M3 7l13-3 4 14-13 3z" fill="#fff8e8" />
        <path d="M6 10l9-2M7 13l8-2M8 16l7-2" stroke="#967142" />
        <path d="M14 13l7-11 2 1-7 11-3 2z" fill="#a33a10" />
      </>
    ),
  },
  {
    name: '广联达土建',
    running: true,
    art: (
      <>
        <rect width="24" height="24" rx="5" fill="#2fbd63" />
        <path d="M7.500 6v12M5.500 6h4M5.500 18h4M8 12h11M18.500 9.500v4.500" stroke="#fff" strokeWidth="2.200" />
      </>
    ),
  },
];

const Taskbar = () => (
  <nav className="flex h-10 shrink-0 bg-[#000c10] text-white">
    <button aria-label="开始" className="flex w-12 shrink-0 items-center justify-center bg-black">
      <Icon>
        <path d="M0 2.300L6.500 1.400v6.200H0zM7.300 1.300L16 0v7.600H7.300zM0 8.400h6.500v6.200L0 13.700zM7.300 8.400H16V16l-8.700-1.300z" fill="#fff" />
      </Icon>
    </button>
    <div className="flex w-[344px] shrink-0 items-center bg-[#333] pr-[13px] pl-[9px]">
      <Icon className="h-[22px] w-[22px]" box="0 0 22 22">
        <circle cx="11" cy="11" r="9.300" stroke="#fff" strokeWidth="2.600" />
      </Icon>
      <input
        aria-label="搜索"
        placeholder="在这里输入你要搜索的内容"
        className="ml-[5px] min-w-0 flex-1 bg-transparent text-sm placeholder:text-[#9b9b9b]"
      />
      <Icon className="h-[17px] w-[15px]" box="0 0 15 17">
        <path d="M5 1h5v10H5zM2 7v6h11V7M7.500 13v3M5 16.500h5" stroke="#a0a0a0" />
      </Icon>
    </div>
    <button aria-label="任务视图" className="flex w-12 shrink-0 items-center justify-center">
      <Icon className="h-[15px] w-[21px]" box="0 0 21 15">
        <path d="M4.500.5h11v14h-11zM3 2.500H.5v10H3M17.500 2.500H20v10h-2.500" stroke="#fff" />
      </Icon>
    </button>
    <button aria-label="应用" className="flex w-[52px] shrink-0 items-center justify-center">
      <Icon className="h-[22px] w-[22px]" box="0 0 22 22">
        <path d="M1 6a5 5 0 0 1 10-1v5H5a4 4 0 0 1-4-4zM12 1h5a4.500 4.500 0 0 1 0 9 5 5 0 0 1-5-5zM10 12v5a4.500 4.500 0 0 1-9 0 5 5 0 0 1 5-5zM12 11h4a5 5 0 1 1-5 5z" fill="#eee" />
      </Icon>
    </button>
    <button aria-label="浏览器" className="flex w-[52px] shrink-0 items-center justify-center">
      <Icon className="h-6 w-6" box="0 0 24 24">
        {ieShape('#eee')}
        <path d="M4 22C-1 20 7 9 15 4s10-2 6 4" stroke="#eee" strokeWidth="1.300" />
      </Icon>
    </button>
    <button aria-label="通知" className="flex w-[52px] shrink-0 items-center justify-center">
      <Icon className="h-[26px] w-[28px]" box="0 0 28 26">
        <circle cx="11" cy="15" r="8.500" stroke="#ccc" strokeWidth="1.200" />
        <path d="M13 11q-6-3-7 3t6 6q4-1 4-5-1-3-4-1" stroke="#ccc" strokeWidth="1.500" />
        <path d="M22 0q5 1 5 8l2 5H16l1-5q0-7 5-8z" fill="#e3a51a" />
      </Icon>
    </button>
    <div className="ml-1 flex shrink-0">
      {taskIcons.map((t) => (
        <button
          key={t.name}
          aria-label={t.name}
          className={
            t.active
              ? 'flex w-[42px] flex-col items-center justify-end bg-[#3a4245]'
              : 'flex w-[42px] flex-col items-center justify-end px-1'
          }
        >
          <Icon className="mb-[6px] h-6 w-6" box="0 0 24 24">
            {t.art}
          </Icon>
          <span className={t.running ? 'h-0.5 w-full bg-[#76b9ed]' : 'h-0.5 w-full'} />
        </button>
      ))}
    </div>
    <div className="ml-auto flex items-center whitespace-nowrap">
      <span>链接</span>
      <span className="ml-[19px] w-12 text-center leading-[17px]">
        12%
        <br />
        CPU使用
      </span>
      <Icon className="ml-5 h-[11px] w-[13px]" box="0 0 13 11">
        <path d="M1 8.500L6.500 3 12 8.500" stroke="#fff" strokeWidth="1.200" />
      </Icon>
      <Icon className="ml-[10px] h-3 w-[15px]" box="0 0 15 12">
        <path d="M3 0h9l3 4-7.500 8L0 4z" fill="#e22a22" />
        <path d="M3 0l2 4h5l2-4z" fill="#ff8b7c" />
      </Icon>
      <Icon className="ml-2 h-3 w-4" box="0 0 16 12">
        <path d="M5.500 3.500h9v7h-9z" stroke="#fff" />
        <path d="M7 5h6v4H7zM15 5h1v4h-1z" fill="#fff" />
        <path d="M1.500 0v3M4.500 0v3M0 3.500h6M1.500 4q0 3 1.500 3t1.500-3M3 7v4h2" stroke="#fff" />
      </Icon>
      <Icon className="ml-2 h-[14px] w-4" box="0 0 16 14">
        <path d="M.5 5h2.500l4-4v12l-4-4H.5z" stroke="#fff" />
        <path d="M9 5q1.500 2 0 4M11 3q3 4 0 8M13.500 1q4 6 0 12" stroke="#fff" />
      </Icon>
      <Icon className="ml-2 h-[13px] w-[23px]" box="0 0 23 13">
        <path d="M.5.5h22v12H.5z" stroke="#fff" />
        <path d="M3 3.500h17M3 6.500h17" stroke="#fff" strokeDasharray="2 1" />
        <path d="M5 9.500h13" stroke="#fff" />
      </Icon>
      <span className="ml-[11px]">中</span>
      <SogouLogo className="ml-[13px] h-4 w-4" />
      <span className="ml-[17px] w-[60px] text-center leading-[19px]">
        12:49
        <br />
        2018/5/25
      </span>
    </div>
    <div className="ml-4 flex w-[44px] shrink-0 items-center border-r border-[#444] bg-black pl-[3px]">
      <Icon className="h-6 w-6" box="0 0 24 24">
        <path d="M0 0h16v13H8l-3 3v-3H0z" fill="#fff" />
        <path d="M3 3.500h10M3 6.500h10M3 9.500h6" stroke="#000" />
        <circle cx="15.500" cy="15.500" r="7.500" fill="#333" stroke="#888" />
        <text x="12" y="20" fill="#fff" className="font-['Noto_Sans'] text-xs font-bold">
          1
        </text>
      </Icon>
    </div>
  </nav>
);

const App = () => {
  return (
    <div className="relative flex h-screen flex-col overflow-hidden bg-[#f0f0f0] font-['Noto_Sans','Noto_Sans_CJK_SC',sans-serif] text-xs leading-4 text-black">
      <TitleBar />
      <MenuBar />
      <MainToolbar />
      <div className="flex min-h-0 flex-1 gap-[6px] pb-0.5">
        <ModulePanel />
        <Workspace />
      </div>
      <StatusBar />
      <Taskbar />
      <PolygonEditor />
      <GridDialog />
      <InputMethodBar />
      <SpeedBall />
    </div>
  );
};

export default App;
